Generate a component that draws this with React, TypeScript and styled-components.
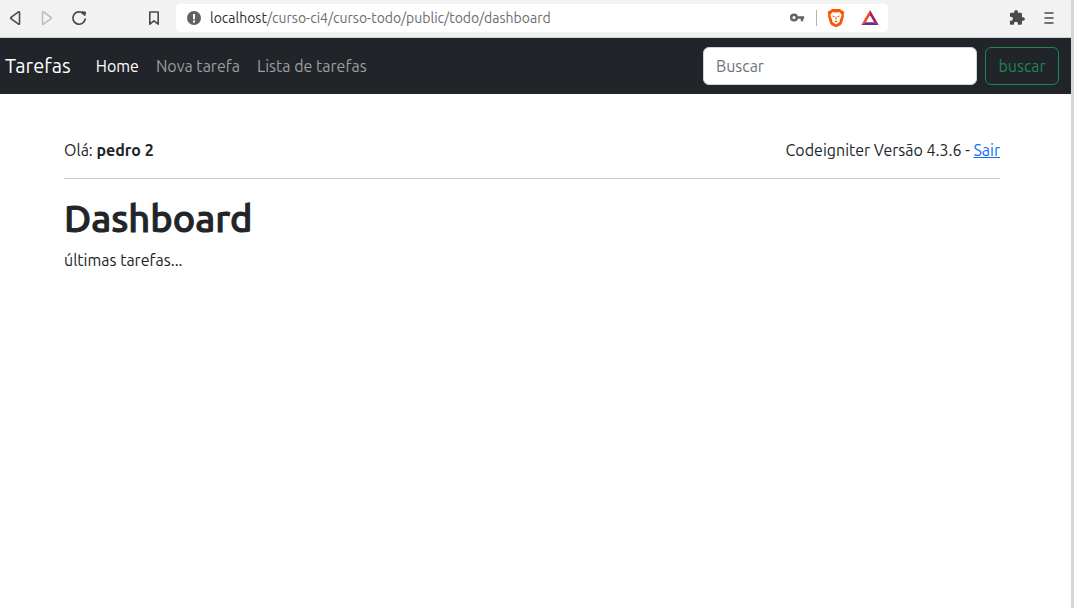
import React from "react";
import styled, { createGlobalStyle } from "styled-components";

const GlobalStyle = createGlobalStyle`
  *, *::before, *::after { box-sizing: border-box; }
  body {
    margin: 0;
    background: #fff;
    color: #212529;
    font-family: Ubuntu, "Noto Sans", "Open Sans", sans-serif;
    font-size: 16px;
    line-height: 24px;
  }
  button, input { font: inherit; }
`;

const Window = styled.div`
  min-height: 100vh;
  border-right: 3px solid #d3d7da;
`;

const Toolbar = styled.header`
  display: flex;
  align-items: center;
  height: 38px;
  padding: 0 12px 2px 5px;
  background: #f2f2f2;
  border-bottom: 1px solid #d0d3d6;
`;

const IconGroup = styled.div<{ $gap: number }>`
  display: flex;
  align-items: center;
  gap: ${(p) => p.$gap}px;
`;

const IconButton = styled.button`
  display: flex;
  align-items: center;
  justify-content: center;
  width: 20px;
  height: 20px;
  padding: 0;
  border: 0;
  background: transparent;
  color: #494949;
  &:disabled { color: #bcbcbc; }
  svg { display: block; }
`;

const BookmarkSlot = styled.div`
  margin: 0 12px 0 55px;
`;

const AddressBar = styled.div`
  display: flex;
  align-items: center;
  flex: 0 1 712px;
  height: 28px;
  margin-right: auto;
  padding: 0 8px;
  border-radius: 4px;
  background: #fff;
`;

const Address = styled.a`
  flex: 1;
  margin-left: 6px;
  color: #696c70;
  font-size: 14px;
  line-height: 20px;
  text-decoration: none;
`;

const Host = styled.span`
  color: #2c2e31;
`;

const Separator = styled.span`
  width: 1px;
  height: 16px;
  margin: 0 9px;
  background: #b4b4b4;
`;

const Navbar = styled.nav`
  display: flex;
  align-items: center;
  height: 56px;
  padding: 0 12px 0 5px;
  background: #212529;
`;

const Brand = styled.a`
  margin-right: 25px;
  color: #fff;
  font-size: 20px;
  line-height: 30px;
  text-decoration: none;
`;

const NavLinks = styled.div`
  display: flex;
  gap: 17px;
`;

const NavLink = styled.a<{ $active?: boolean }>`
  color: ${(p) => (p.$active ? "#fff" : "#9b9d9e")};
  text-decoration: none;
`;

const SearchForm = styled.form`
  display: flex;
  gap: 8px;
  margin-left: auto;
`;

const SearchInput = styled.input`
  width: 274px;
  height: 38px;
  padding: 6px 12px;
  border: 1px solid #ced4da;
  border-radius: 6px;
  background: #fff;
  color: #212529;
  &::placeholder { color: #6c757d; opacity: 1; }
`;

const SearchButton = styled.button`
  width: 74px;
  height: 38px;
  padding: 0;
  border: 1px solid #198754;
  border-radius: 6px;
  background: transparent;
  color: #198754;
`;

const Content = styled.main`
  padding: 44px 71px 0 64px;
`;

const UserRow = styled.div`
  display: flex;
  justify-content: space-between;
`;

const Divider = styled.hr`
  height: 1px;
  margin: 16px 0;
  border: 0;
  background: #c7c8c9;
`;

const Title = styled.h1`
  margin: 0 0 7px;
  font-size: 38px;
  font-weight: 500;
  line-height: 46px;
  -webkit-text-stroke: 1px currentColor;
`;

const Text = styled.p`
  margin: 0;
`;

const ExitLink = styled.a`
  color: #0d6efd;
  text-decoration: underline;
`;

const BackIcon = () => (
  <svg width="20" height="20" viewBox="0 0 20 20" fill="none" stroke="currentColor" strokeWidth="1.6" strokeLinejoin="round">
    <path d="M14.5 4.4v11.2c0 .7-.5.9-1 .5L6 10.6c-.4-.3-.4-.9 0-1.2l7.5-5.5c.5-.4 1-.2 1 .5Z" />
  </svg>
);

const ForwardIcon = () => (
  <svg width="20" height="20" viewBox="0 0 20 20" fill="none" stroke="currentColor" strokeWidth="1.5" strokeLinejoin="round">
    <path d="M5.5 4.4v11.2c0 .7.5.9 1 .5l7.5-5.5c.4-.3.4-.9 0-1.2L6.5 3.9c-.5-.4-1-.2-1 .5Z" />
  </svg>
);

const ReloadIcon = () => (
  <svg width="20" height="20" viewBox="0 0 20 20" fill="none" stroke="currentColor" strokeWidth="1.7">
    <path d="M14.2 5.4A6.2 6.2 0 1 0 16.2 11" strokeLinecap="round" />
    <path d="M12.4 4.5c0-.9.5-1.3 1.3-1.2l2.3.2c.8.1 1.1.6 1 1.3l-.3 2.3c-.1.8-.8 1-1.4.6l-2.4-1.9c-.3-.3-.5-.7-.5-1.3Z" fill="currentColor" stroke="none" />
  </svg>
);

const BookmarkIcon = () => (
  <svg width="20" height="20" viewBox="0 0 20 20" fill="none" stroke="currentColor" strokeWidth="1.6" strokeLinejoin="round">
    <path d="M5.8 4h8.4v12.2L10 12.8l-4.2 3.4Z" />
  </svg>
);

const InfoIcon = () => (
  <svg width="20" height="20" viewBox="0 0 20 20">
    <circle cx="10" cy="10" r="7" fill="#5f6368" />
    <path d="M9 6h2v5.2H9ZM9 12.6h2v2H9Z" fill="#fff" />
  </svg>
);

const KeyIcon = () => (
  <svg width="20" height="20" viewBox="0 0 20 20" fill="none" stroke="#626467">
    <circle cx="7" cy="9.5" r="2.8" strokeWidth="2.5" />
    <path d="M10 9.5h7.2M15 9v4.2" strokeWidth="2.5" />
  </svg>
);

const ShieldIcon = () => (
  <svg width="20" height="20" viewBox="0 0 20 20">
    <path d="M5.8 1h8.4l1.5 1.7 1.3-.2 1.2 2.3-.6 1.7.4 1.5-2 7.2-1.6 2.1L10 19.2l-4.4-1.9L4 15.2 2 8l.4-1.5-.6-1.7L3 2.5l1.3.2Z" fill="#ff5000" />
    <path d="M6.5 3.9 10 4.5l3.5-.6 2.2 2.8-.5 2.5-1.6 3 .2 1.5-2 1.5L10 16.4l-1.8-1.2-2-1.5.2-1.5-1.6-3-.5-2.5Z" fill="#fff" />
    <path d="m6 7.500 2.400.4.200.8-1 .5ZM14 7.500l-2.400.4-.2.8 1 .5ZM9.600 8.500h.8l.3 2.700-.7.6-.7-.6ZM8.200 13.200l1.800-.7 1.800.7-1.800 1Z" fill="#ff5000" />
  </svg>
);

const TriangleIcon = () => (
  <svg width="20" height="20" viewBox="0 0 20 20">
    <path d="M10 2 1.2 17l4.7-2.8L10 7.2Z" fill="#ff4724" />
    <path d="m10 2 8.8 15-4.7-2.8L10 7.2Z" fill="#9e1f63" />
    <path d="M1.2 17h17.6l-4.7-2.8H5.9Z" fill="#662d91" />
  </svg>
);

const PuzzleIcon = () => (
  <svg width="20" height="20" viewBox="0 0 24 24" fill="currentColor">
    <path d="M19.3 11H18V7.5c0-1-.7-1.7-1.7-1.7h-3.2V4.5a2.2 2.2 0 0 0-4.4 0v1.3H5.2c-1 0-1.7.7-1.7 1.7v3h1.2a2.4 2.4 0 0 1 0 4.8H3.5v3.2c0 1 .7 1.7 1.7 1.7h3.1V19a2.4 2.4 0 0 1 4.8 0v1.2h3.2c1 0 1.7-.7 1.7-1.7v-3.1h1.3a2.2 2.2 0 0 0 0-4.4Z" />
  </svg>
);

const MenuIcon = () => (
  <svg width="20" height="20" viewBox="0 0 20 20" fill="none" stroke="currentColor" strokeWidth="1.5" strokeLinecap="round">
    <path d="M6 5h8M6 10h8M6 15h8" />
  </svg>
);

export default function App() {
  return (
    <>
      <GlobalStyle />
      <Window>
        <Toolbar>
          <IconGroup $gap={12}>
            <IconButton aria-label="Voltar"><BackIcon /></IconButton>
            <IconButton aria-label="Avançar" disabled><ForwardIcon /></IconButton>
            <IconButton aria-label="Recarregar"><ReloadIcon /></IconButton>
          </IconGroup>
          <BookmarkSlot>
            <IconButton aria-label="Favoritos"><BookmarkIcon /></IconButton>
          </BookmarkSlot>
          <AddressBar>
            <IconButton aria-label="Informações do site"><InfoIcon /></IconButton>
            <Address href="#">
              <Host>localhost</Host>/curso-ci4/curso-todo/public/todo/dashboard
            </Address>
            <IconButton aria-label="Senhas"><KeyIcon /></IconButton>
            <Separator />
            <IconGroup $gap={14}>
              <IconButton aria-label="Escudo"><ShieldIcon /></IconButton>
              <IconButton aria-label="Recompensas"><TriangleIcon /></IconButton>
            </IconGroup>
          </AddressBar>
          <IconGroup $gap={12}>
            <IconButton aria-label="Extensões"><PuzzleIcon /></IconButton>
            <IconButton aria-label="Menu"><MenuIcon /></IconButton>
          </IconGroup>
        </Toolbar>
        <Navbar>
          <Brand href="#">Tarefas</Brand>
          <NavLinks>
            <NavLink href="#" $active>Home</NavLink>
            <NavLink href="#">Nova tarefa</NavLink>
            <NavLink href="#">Lista de tarefas</NavLink>
          </NavLinks>
          <SearchForm onSubmit={(e) => e.preventDefault()}>
            <SearchInput type="search" placeholder="Buscar" aria-label="Buscar" />
            <SearchButton type="submit">buscar</SearchButton>
          </SearchForm>
        </Navbar>
        <Content>
          <UserRow>
            <Text>Olá: <strong>pedro 2</strong></Text>
            <Text>Codeigniter Versão 4.3.6 - <ExitLink href="#">Sair</ExitLink></Text>
          </UserRow>
          <Divider />
          <Title>Dashboard</Title>
          <Text>últimas tarefas...</Text>
        </Content>
      </Window>
    </>
  );
}
